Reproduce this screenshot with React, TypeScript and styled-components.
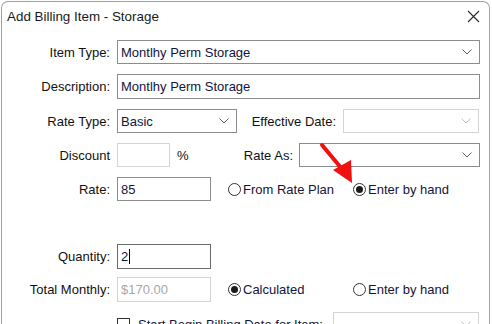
import React from 'react'
import styled, { createGlobalStyle } from 'styled-components'

const GlobalStyle = createGlobalStyle`
  html, body {
    margin: 0;
    padding: 0;
    background: #ffffff;
    overflow: hidden;
  }
  body {
    font-family: "Liberation Sans", Arial, sans-serif;
    font-size: 13px;
    color: #000;
  }
`

const Window = styled.div`
  box-sizing: border-box;
  margin: 1px 0 0 1px;
  width: 489px;
  height: 340px;
  border: 1px solid #a0a0a0;
  border-bottom: none;
  border-radius: 7px 7px 0 0;
  background: #ffffff;
  position: relative;
`

const TitleBar = styled.div`
  display: flex;
  align-items: center;
  justify-content: space-between;
  height: 28px;
  padding: 0 9px 0 5px;
`

const Title = styled.div`
  font-size: 13.4px;
  color: #1a1a1a;
`

const Form = styled.div`
  display: flex;
  flex-direction: column;
  gap: 10px;
  padding-top: 10px;
`

const Row = styled.div<{ $h?: number; $mt?: number }>`
  display: flex;
  align-items: center;
  height: ${(p) => p.$h ?? 24}px;
  margin-top: ${(p) => p.$mt ?? 0}px;
`

const Spacer = styled.div<{ $h: number }>`
  height: ${(p) => p.$h}px;
`

const Label = styled.div<{ $w: number; $gap?: number }>`
  width: ${(p) => p.$w}px;
  margin-right: ${(p) => p.$gap ?? 7}px;
  text-align: right;
  white-space: nowrap;
  color: #111;
`

const Box = styled.div<{ $w: number; $h?: number; $tone?: 'normal' | 'dim' | 'focus' }>`
  box-sizing: border-box;
  position: relative;
  display: flex;
  align-items: center;
  width: ${(p) => p.$w}px;
  height: ${(p) => p.$h ?? 24}px;
  padding: 0 3px;
  border: 1px solid
    ${(p) => (p.$tone === 'dim' ? '#d4d4d4' : p.$tone === 'focus' ? '#6a6a6a' : '#8c8c8c')};
  color: ${(p) => (p.$tone === 'dim' ? '#a8a8a8' : '#14143c')};
  background: #fff;
  white-space: nowrap;
  overflow: hidden;
`

const Chevron = styled.svg<{ $dim?: boolean }>`
  position: absolute;
  right: 7px;
  top: 50%;
  margin-top: -3px;
  width: 10px;
  height: 6px;
  stroke: ${(p) => (p.$dim ? '#c4c4c4' : '#606060')};
`

const Caret = styled.span`
  display: inline-block;
  width: 1px;
  height: 15px;
  margin-left: 1px;
  background: #000;
`

const Percent = styled.div`
  margin-left: 7px;
  width: 10px;
  color: #111;
`

const Option = styled.label<{ $w?: number }>`
  display: flex;
  align-items: center;
  gap: 2px;
  width: ${(p) => (p.$w ? `${p.$w}px` : 'auto')};
  white-space: nowrap;
  color: #14143c;
`

const RadioDot = styled.span<{ $on?: boolean }>`
  box-sizing: border-box;
  width: 13px;
  height: 13px;
  border-radius: 50%;
  border: 1px solid #333;
  display: flex;
  align-items: center;
  justify-content: center;
  &::after {
    content: '';
    width: 7px;
    height: 7px;
    border-radius: 50%;
    background: ${(p) => (p.$on ? '#1a1a1a' : 'transparent')};
  }
`

const CheckSquare = styled.span`
  box-sizing: border-box;
  width: 13px;
  height: 13px;
  border: 1px solid #333;
  margin-right: 6px;
`

const Indent = styled.div<{ $w: number }>`
  width: ${(p) => p.$w}px;
  flex: none;
`

const Arrow = styled.svg`
  position: absolute;
  left: 314px;
  top: 138px;
  width: 44px;
  height: 48px;
  pointer-events: none;
`

const Select = ({ w, value, dim }: { w: number; value?: string; dim?: boolean }) => (
  <Box $w={w} $tone={dim ? 'dim' : 'normal'}>
    {value}
    <Chevron $dim={dim} viewBox="0 0 10 6" fill="none" strokeWidth={1}>
      <path d="M0.5 0.5 L5 5 L9.5 0.5" />
    </Chevron>
  </Box>
)

const Radio = ({ label, on, w }: { label: string; on?: boolean; w?: number }) => (
  <Option $w={w}>
    <RadioDot $on={on} />
    {label}
  </Option>
)

export default function App() {
  return (
    <>
      <GlobalStyle />
      <Window>
        <TitleBar>
          <Title>Add Billing Item - Storage</Title>
          <svg width="13" height="13" viewBox="0 0 13 13" stroke="#2a2a2a" strokeWidth="1.1">
            <path d="M1 1 L12 12 M12 1 L1 12" />
          </svg>
        </TitleBar>
        <Form>
          <Row>
            <Label $w={108}>Item Type:</Label>
            <Select w={363} value="Montlhy Perm Storage" />
          </Row>
          <Row $h={25}>
            <Label $w={108}>Description:</Label>
            <Box $w={363} $h={25}>Montlhy Perm Storage</Box>
          </Row>
          <Row>
            <Label $w={108}>Rate Type:</Label>
            <Select w={120} value="Basic" />
            <Label $w={99}>Effective Date:</Label>
            <Select w={136} dim />
          </Row>
          <Row>
            <Label $w={108}>Discount</Label>
            <Box $w={53} $tone="dim" />
            <Percent>%</Percent>
            <Label $w={106} $gap={6}>Rate As:</Label>
            <Select w={181} />
          </Row>
          <Row>
            <Label $w={108}>Rate:</Label>
            <Box $w={94}>85</Box>
            <Indent $w={17} />
            <Radio w={125} label="From Rate Plan" />
            <Radio label="Enter by hand" on />
          </Row>
          <Spacer $h={23} />
          <Row $h={25}>
            <Label $w={108}>Quantity:</Label>
            <Box $w={94} $h={25} $tone="focus">
              2<Caret />
            </Box>
          </Row>
          <Row $mt={-2} $h={25}>
            <Label $w={108}>Total Monthly:</Label>
            <Box $w={94} $h={25} $tone="dim">$170.00</Box>
            <Indent $w={17} />
            <Radio w={125} label="Calculated" on />
            <Radio label="Enter by hand" />
          </Row>
          <Row>
            <Indent $w={115} />
            <Option $w={216}>
              <CheckSquare />
              Start Begin Billing Date for Item:
            </Option>
            <Select w={146} dim />
          </Row>
        </Form>
        <Arrow viewBox="0 0 44 48">
          <path d="M6 5 L26 29" stroke="#f01010" strokeWidth="4" strokeLinecap="round" />
          <path d="M17 30 L36 43 L35 20 Z" fill="#f01010" />
        </Arrow>
      </Window>
    </>
  )
}
